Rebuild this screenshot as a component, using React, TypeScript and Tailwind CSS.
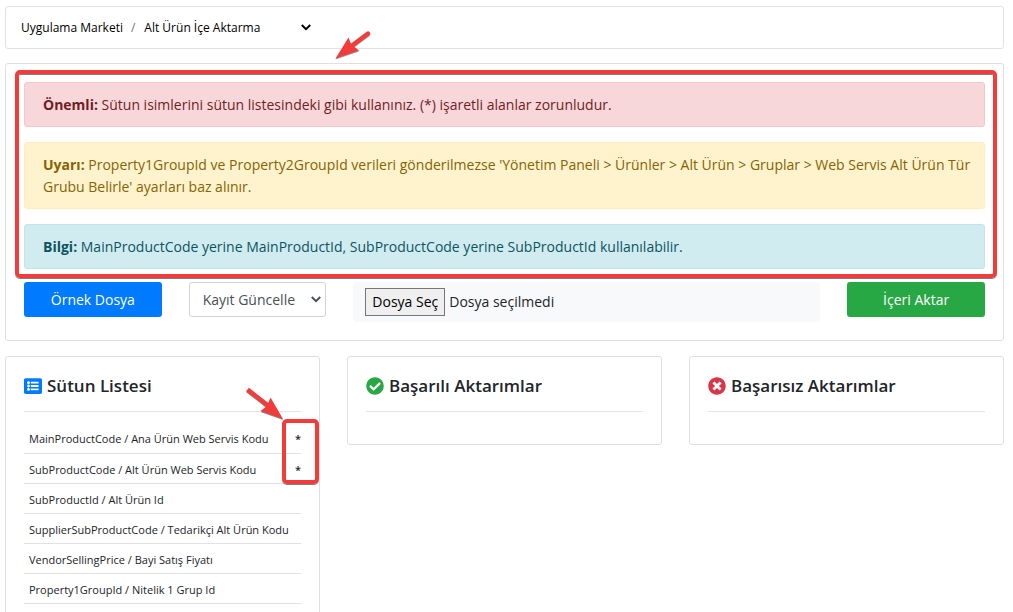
import type { ReactNode } from 'react';
import { FaCheckCircle, FaListAlt, FaTimesCircle } from 'react-icons/fa';

const columns = [
    { name: 'MainProductCode / Ana Ürün Web Servis Kodu', required: true },
    { name: 'SubProductCode / Alt Ürün Web Servis Kodu', required: true },
    { name: 'SubProductId / Alt Ürün Id', required: false },
    { name: 'SupplierSubProductCode / Tedarikçi Alt Ürün Kodu', required: false },
    { name: 'VendorSellingPrice / Bayi Satış Fiyatı', required: false },
    { name: 'Property1GroupId / Nitelik 1 Grup Id', required: false },
];

const Chevron = ({ className }: { className: string }) => (
    <svg viewBox="0 0 10 7" className={`pointer-events-none h-[7px] w-[10px] ${className}`} fill="none" stroke="currentColor" strokeWidth="2">
        <path d="M0.8 1 L5 5.2 L9.2 1" />
    </svg>
);

const Card = ({ icon, title, children }: { icon: ReactNode; title: string; children?: ReactNode }) => (
    <section className="relative rounded-[3px] border border-[#dedfe1] px-[18px] pt-4 pb-8">
        <h2 className="flex items-center gap-[5px] border-b border-[#e2e3e4] pb-[13px] text-[17px] leading-[25px] font-semibold text-[#212529]">
            {icon}
            {title}
        </h2>
        {children}
    </section>
);

const App = () => {
    return (
        <div className="h-screen overflow-hidden bg-white pt-[6px] pr-[9px] pl-[5px] font-['Open_Sans','Noto_Sans',sans-serif] text-sm text-[#212529]">
            <nav className="relative flex h-[43px] items-center rounded-[3px] border border-[#dee2e6] px-[15px] text-[12px] text-black">
                <a href="#market">Uygulama Marketi</a>
                <span className="px-2 text-[#6c757d]">/</span>
                <div className="flex items-center">
                    <select aria-label="Sayfa" className="w-[170px] appearance-none bg-transparent pl-px outline-none">
                        <option>Alt Ürün İçe Aktarma</option>
                    </select>
                    <Chevron className="-ml-[12px]" />
                </div>
                <svg viewBox="0 0 38 32" className="pointer-events-none absolute top-[21px] left-[328px] z-10 h-8 w-[38px] drop-shadow-[0_1px_0_#999]">
                    <path d="M34 5.5 L18 17.5" stroke="#f23c3c" strokeWidth="4.4" strokeLinecap="round" />
                    <path d="M1.5 30.5 L14.5 9.5 L17 16 L25 22.5 Z" fill="#f23c3c" />
                </svg>
            </nav>

            <main className="mt-[14px] rounded-[3px] border border-[#dedfe1] p-[18px]">
                <div className="relative flex flex-col gap-[15px] leading-[22px]">
                    <div className="rounded-[3px] border border-[#f5c6cb] bg-[#f8d7da] pt-[11px] pr-2 pb-[10px] pl-[18px] text-[#721c24]">
                        <strong>Önemli:</strong> Sütun isimlerini sütun listesindeki gibi kullanınız. (*) işaretli alanlar zorunludur.
                    </div>
                    <div className="rounded-[3px] border border-[#ffeeba] bg-[#fff3cd] pt-[11px] pr-2 pb-[10px] pl-[18px] text-[#856404]">
                        <strong>Uyarı:</strong> Property1GroupId ve Property2GroupId verileri gönderilmezse 'Yönetim Paneli &gt; Ürünler &gt; Alt Ürün &gt; Gruplar &gt; Web Servis Alt Ürün Tür Grubu Belirle' ayarları baz alınır.
                    </div>
                    <div className="rounded-[3px] border border-[#bee5eb] bg-[#d1ecf1] pt-[11px] pr-2 pb-[10px] pl-[18px] text-[#0c5460]">
                        <strong>Bilgi:</strong> MainProductCode yerine MainProductId, SubProductCode yerine SubProductId kullanılabilir.
                    </div>
                    {/* Highlight around the notices */}
                    <div className="pointer-events-none absolute -top-3 -right-3 -bottom-[9px] -left-[9px] rounded-[5px] border-4 border-[#f23c3c] shadow-[0_1px_0_#808080,inset_0_1px_0_#808080]"></div>
                </div>

                <form className="mt-[13px] grid grid-cols-12 items-start gap-x-[27px]">
                    <button type="button" className="col-span-2 h-[35px] rounded-[3px] bg-[#007bff] text-white">Örnek Dosya</button>
                    <div className="col-span-2 flex items-center">
                        <select aria-label="İşlem türü" className="h-[35px] w-full appearance-none rounded-[3px] border border-[#ced4da] bg-white pl-[13px] text-[#495057]">
                            <option>Kayıt Güncelle</option>
                        </select>
                        <Chevron className="-ml-[15px] text-[#495057]" />
                    </div>
                    <label className="col-span-6 flex h-10 items-center gap-1 rounded-[3px] bg-[#f8f9fa] px-3">
                        <input type="file" className="sr-only" />
                        <span className="border border-[#767676] bg-[#efefef] px-[6px] py-[2px] leading-[22px] text-black">Dosya Seç</span>
                        <span>Dosya seçilmedi</span>
                    </label>
                    <button type="submit" className="col-span-2 h-[35px] rounded-[3px] bg-[#28a745] text-white">İçeri Aktar</button>
                </form>
            </main>

            <div className="mt-[15px] grid grid-cols-3 items-start gap-x-[27px]">
                <Card icon={<FaListAlt className="text-[18px] text-[#007bff]" />} title="Sütun Listesi">
                    <table className="mt-[11px] w-full text-[11px]">
                        <tbody>
                            {columns.map((column) => (
                                <tr key={column.name} className="h-[30px] border-b border-[#dee2e6]">
                                    <td className="pt-[3px] pl-[5px] whitespace-nowrap">{column.name}</td>
                                    <td className="pt-[3px] text-right font-semibold">{column.required && '*'}</td>
                                </tr>
                            ))}
                        </tbody>
                    </table>
                    <svg viewBox="0 0 40 36" className="pointer-events-none absolute top-7 left-[238px] h-9 w-10 drop-shadow-[0_1px_0_#888]">
                        <path d="M3.5 4.5 L24 20.5" stroke="#f23c3c" strokeWidth="4.4" />
                        <path d="M39 34 L16.5 26 L23 21 L26.5 12.5 Z" fill="#f23c3c" />
                    </svg>
                    {/* Highlight around the required marks */}
                    <div className="pointer-events-none absolute top-[62px] right-0 h-[65px] w-[37px] rounded-[5px] border-4 border-[#f23c3c] shadow-[0_1px_0_#808080]"></div>
                </Card>
                <Card icon={<FaCheckCircle className="text-[18px] text-[#28a745]" />} title="Başarılı Aktarımlar" />
                <Card icon={<FaTimesCircle className="text-[18px] text-[#dc3545]" />} title="Başarısız Aktarımlar" />
            </div>
        </div>
    );
};

export default App;
